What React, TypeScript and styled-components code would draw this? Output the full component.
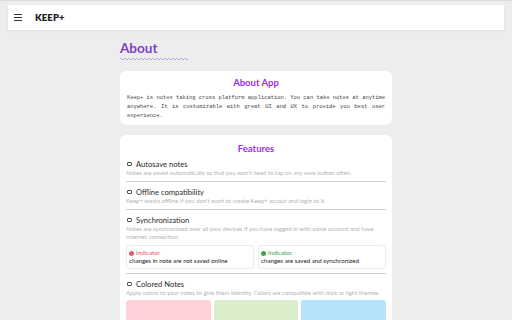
import React from "react";
import styled, { createGlobalStyle } from "styled-components";

const Global = createGlobalStyle`
  html, body { margin: 0; padding: 0; background: #ededed; }
  body { font-family: Lato, "Open Sans", sans-serif; }
  * { box-sizing: border-box; }
`;

const Page = styled.div`
  min-height: 320px;
  border-top: 1px solid #dcdcdc;
  padding-top: 4px;
`;

const Header = styled.header`
  height: 25px;
  margin: 0 8px;
  background: #fff;
  display: flex;
  align-items: center;
  padding-left: 6px;
  gap: 13px;
  box-shadow: 0 1px 2px rgba(0,0,0,0.06);
`;

const Burger = styled.div`
  width: 8px;
  display: flex;
  flex-direction: column;
  gap: 2px;
  span { display: block; height: 1.2px; background: #333; }
`;

const Brand = styled.div`
  font-weight: 800;
  font-size: 9.5px;
  color: #1e1e1e;
  letter-spacing: 0.1px;
`;

const Main = styled.main`
  width: 272px;
  margin: 0 auto;
  padding-top: 9px;
  display: flex;
  flex-direction: column;
`;

const Title = styled.h1`
  margin: 0;
  font-size: 13.5px;
  line-height: 18px;
  font-weight: 700;
  color: #7b42c4;
`;

const Wave = styled.svg`
  display: block;
  margin-bottom: 10px;
`;

const Card = styled.section<{ $pad?: string }>`
  background: #fff;
  border-radius: 6px;
  padding: ${(p) => p.$pad || "7px 7px"};
  margin-bottom: 10px;
`;

const CardTitle = styled.h2<{ $mb?: number }>`
  margin: 0 0 ${(p) => p.$mb ?? 4}px;
  text-align: center;
  font-size: 9.5px;
  line-height: 12px;
  font-weight: 700;
  color: #9a2cf2;
`;

const Mono = styled.p`
  margin: 0;
  font-family: "Liberation Mono", monospace;
  font-size: 5.45px;
  line-height: 9px;
  color: #444;
  text-align: justify;
`;

const Feature = styled.div<{ $last?: boolean }>`
  padding: 2px 0 4px;
  border-bottom: ${(p) => (p.$last ? "none" : "1px solid #cfcfcf")};
  margin-bottom: 3px;
`;

const FeatureHead = styled.div`
  display: flex;
  align-items: center;
  gap: 4px;
  font-size: 7.6px;
  line-height: 10px;
  color: #2a2a2a;
`;

const Box = styled.span`
  width: 5px;
  height: 4.5px;
  border: 1px solid #3a3a3a;
  border-radius: 1.2px;
  margin-left: 1px;
`;

const Desc = styled.div`
  font-size: 6px;
  line-height: 8px;
  color: #b4b4b4;
`;

const IndRow = styled.div`
  display: grid;
  grid-template-columns: 1fr 1fr;
  gap: 4px;
  margin: 4px 0 0;
`;

const Ind = styled.div`
  border: 1px solid #ececec;
  border-radius: 3px;
  padding: 3px 2px;
  font-size: 6.2px;
  line-height: 8px;
  color: #222;
`;

const IndLabel = styled.div<{ $c: string }>`
  color: ${(p) => p.$c};
  display: flex;
  align-items: center;
  gap: 2px;
  &::before {
    content: "";
    width: 5px;
    height: 5px;
    border-radius: 50%;
    background: ${(p) => p.$c};
  }
`;

const Swatches = styled.div`
  display: grid;
  grid-template-columns: repeat(3, 1fr);
  gap: 3px;
  margin-top: 3px;
`;

const Swatch = styled.div<{ $c: string }>`
  height: 40px;
  border-radius: 3px;
  background: ${(p) => p.$c};
`;

const wavePath = (() => {
  let d = "M0 2";
  for (let x = 0; x < 68; x += 2) {
    d += ` Q${x + 1} ${x % 4 === 0 ? 0 : 4} ${x + 2} 2`;
  }
  return d;
})();

export default function App() {
  return (
    <>
      <Global />
      <Page>
        <Header>
          <Burger>
            <span />
            <span />
            <span />
          </Burger>
          <Brand>KEEP+</Brand>
        </Header>
        <Main>
          <Title>About</Title>
          <Wave width="68" height="4" viewBox="0 0 68 4">
            <path d={wavePath} fill="none" stroke="#b39ae0" strokeWidth="0.8" />
          </Wave>
          <Card $pad="6px 7px 5px">
            <CardTitle>About App</CardTitle>
            <Mono>
              Keep+ is notes taking cross platform application. You can take notes at anytime
              anywhere. It is customizable with great UI and UX to provide you best user
              experience.
            </Mono>
          </Card>
          <Card $pad="8px 6px 0">
            <CardTitle $mb={2}>Features</CardTitle>
            <Feature>
              <FeatureHead><Box />Autosave notes</FeatureHead>
              <Desc>Notes are saved automatically so that you won't need to tap on any save button often.</Desc>
            </Feature>
            <Feature>
              <FeatureHead><Box />Offline compatibility</FeatureHead>
              <Desc>Keep+ works offline if you don't want to create Keep+ accout and login to it.</Desc>
            </Feature>
            <Feature>
              <FeatureHead><Box />Synchronization</FeatureHead>
              <Desc>
                Notes are synchronized over all your devices if you have logged in with same account and have
                internet connection.
              </Desc>
              <IndRow>
                <Ind>
                  <IndLabel $c="#e05c66">Indicator</IndLabel>
                  changes in note are not saved online
                </Ind>
                <Ind>
                  <IndLabel $c="#3fa34d">Indicator</IndLabel>
                  changes are saved and synchronized
                </Ind>
              </IndRow>
            </Feature>
            <Feature $last>
              <FeatureHead><Box />Colored Notes</FeatureHead>
              <Desc>Apply colors to your notes to give them identity. Colors are compatible with dark or light themes.</Desc>
              <Swatches>
                <Swatch $c="#ffd1d6" />
                <Swatch $c="#d9edca" />
                <Swatch $c="#b4e3fb" />
              </Swatches>
            </Feature>
          </Card>
        </Main>
      </Page>
    </>
  );
}
